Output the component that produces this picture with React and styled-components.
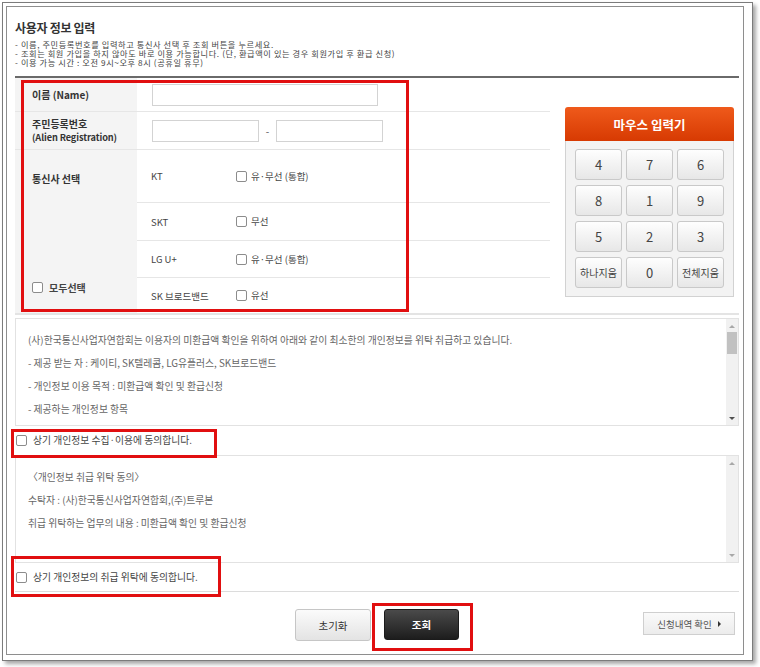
import React from "react";
import styled, { createGlobalStyle } from "styled-components";

const GlobalStyle = createGlobalStyle`
  html, body { margin: 0; padding: 0; background: #fff; }
  body { font-family: "Noto Sans CJK KR", "Noto Sans", sans-serif; color: #333; }
  * { box-sizing: border-box; }
`;

const Page = styled.div`
  position: relative;
  width: 760px;
  height: 667px;
  padding: 2px 0 0 2px;
`;

const OuterFrame = styled.div`
  width: 751px;
  height: 659px;
  border: 1px solid #7b7b7b;
  box-shadow: 3px 3px 4px rgba(0, 0, 0, 0.35);
  padding: 3px 8px 5px 3px;
  background: #fff;
`;

const InnerFrame = styled.div`
  height: 100%;
  border: 1px solid #8e8e8e;
  padding: 0 4px 0 8px;
  display: flex;
  flex-direction: column;
`;

const Title = styled.h2`
  margin: 13px 0 0;
  font-size: 12px;
  line-height: 16px;
  font-weight: bold;
  letter-spacing: -0.3px;
  color: #333;
`;

const Guide = styled.ul`
  list-style: none;
  margin: 3.5px 0 0;
  padding: 0 0 8.7px;
  border-bottom: 2px solid #6a6a6a;
  font-size: 8.2px;
  line-height: 9.3px;
  letter-spacing: 0.6px;
  color: #444;
`;

const FormArea = styled.div`
  display: flex;
  align-items: flex-start;
  border-bottom: 2px solid #e4e4e4;
`;

const Table = styled.div`
  width: 535px;
`;

const Row = styled.div`
  display: grid;
  grid-template-columns: 122px 1fr;
  height: ${(p) => p.$h}px;
  border-bottom: 1px solid #e6e6e6;
`;

const Label = styled.div`
  background: #f4f4f4;
  padding-left: 17px;
  display: flex;
  flex-direction: column;
  justify-content: center;
  font-size: 10px;
  line-height: 13.5px;
  font-weight: bold;
  color: #333;
`;

const SubLabel = styled.span`
  font-size: 9.2px;
  letter-spacing: -0.1px;
`;

const Cell = styled.div`
  display: flex;
  align-items: center;
  padding-left: 15px;
`;

const TextInput = styled.input`
  width: ${(p) => p.$w}px;
  height: 22px;
  border: 1px solid #d3d3d3;
  background: #fff;
  padding: 0 4px;
  outline: none;
`;

const Dash = styled.span`
  width: 17px;
  text-align: center;
  font-size: 10px;
  color: #555;
`;

const CarrierBlock = styled.div`
  display: grid;
  grid-template-columns: 122px 1fr;
  height: 163px;
`;

const CarrierLabel = styled(Label)`
  justify-content: space-between;
  padding-top: 22px;
  padding-bottom: 19px;
  line-height: 13px;
`;

const CarrierRow = styled.div`
  display: grid;
  grid-template-columns: 85px 1fr;
  align-items: center;
  padding-left: 14px;
  height: ${(p) => p.$h}px;
  border-bottom: ${(p) => (p.$last ? "none" : "1px solid #e6e6e6")};
  font-size: 9.5px;
  color: #444;
`;

const Check = styled.label`
  display: inline-flex;
  align-items: center;
  gap: ${(p) => p.$gap || 4}px;
  font-size: ${(p) => p.$size || 9.5}px;
  font-weight: ${(p) => (p.$bold ? "bold" : "normal")};
  color: #444;
  line-height: 13px;
`;

const Box = styled.span`
  width: 11px;
  height: 11px;
  border: 1px solid #8c8c8c;
  border-radius: 2px;
  background: #fff;
  flex: none;
`;

const Keypad = styled.div`
  width: 169px;
  margin: 29px 0 0 15px;
`;

const KeypadHead = styled.div`
  height: 34px;
  border-radius: 3px 3px 0 0;
  background: linear-gradient(#ef5a1b, #d73a02);
  color: #fff;
  font-size: 12.5px;
  font-weight: bold;
  display: flex;
  align-items: center;
  justify-content: center;
`;

const KeypadBody = styled.div`
  background: #f3f3f3;
  border: 1px solid #d2d2d2;
  border-top: none;
  padding: 8px 9px 8px;
  display: grid;
  grid-template-columns: repeat(3, 47px);
  grid-auto-rows: 31px;
  gap: 5px 4px;
`;

const Key = styled.button`
  border: 1px solid #c9c9c9;
  border-radius: 3px;
  background: linear-gradient(#fefefe, #e7e7e7);
  font-family: inherit;
  font-size: ${(p) => (p.$small ? 10 : 13)}px;
  color: #444;
  padding: 0;
`;

const Agreement = styled.div`
  display: flex;
  height: ${(p) => p.$h}px;
  margin-top: ${(p) => p.$mt || 0}px;
  border: 1px solid #e2e2e2;
`;

const AgreementText = styled.div`
  flex: 1;
  overflow: hidden;
  padding: 15px 12px 0;
  font-size: 9.8px;
  line-height: 13px;
  color: #666;

  p {
    margin: 0 0 10px;
  }
`;

const ScrollTrack = styled.div`
  width: 12px;
  flex: none;
  background: #f1f1f1;
  display: flex;
  flex-direction: column;
  align-items: center;
  padding: 6px 0 5px;
`;

const Arrow = styled.div`
  width: 0;
  height: 0;
  border-left: 3px solid transparent;
  border-right: 3px solid transparent;
  ${(p) => (p.$down ? "border-top" : "border-bottom")}: 3px solid ${(p) => p.$color};
  margin-top: ${(p) => (p.$down ? "auto" : "0")};
`;

const Thumb = styled.div`
  width: 10px;
  height: 22px;
  margin-top: 4px;
  background: #c1c1c1;
`;

const AgreeRow = styled.div`
  height: ${(p) => p.$h}px;
  display: flex;
  align-items: center;
  padding-left: 1px;
  border-bottom: ${(p) => (p.$line ? "1px solid #dcdcdc" : "none")};
`;

const ButtonRow = styled.div`
  display: grid;
  grid-template-columns: 1fr auto 1fr;
  align-items: start;
  padding-top: 17px;
`;

const ButtonGroup = styled.div`
  grid-column: 2;
  display: flex;
  gap: 13px;
`;

const ActionButton = styled.button`
  width: ${(p) => p.$w}px;
  height: ${(p) => p.$h}px;
  border-radius: 3px;
  font-family: inherit;
  font-size: 10.5px;
  padding: 0;
  border: 1px solid ${(p) => (p.$dark ? "#1b1b1b" : "#c6c6c6")};
  background: ${(p) =>
    p.$dark ? "linear-gradient(#4a4a4a, #1d1d1d)" : "linear-gradient(#fbfbfb, #e3e3e3)"};
  color: ${(p) => (p.$dark ? "#fff" : "#333")};
  font-weight: ${(p) => (p.$dark ? "bold" : "normal")};
`;

const HistoryButton = styled.button`
  justify-self: end;
  margin: 3px 4px 0 0;
  width: 92px;
  height: 23px;
  border: 1px solid #cfcfcf;
  background: linear-gradient(#fafafa, #ececec);
  font-family: inherit;
  font-size: 9.5px;
  color: #555;
  display: flex;
  align-items: center;
  justify-content: center;
  gap: 6px;
  padding: 0;
`;

const Caret = styled.span`
  width: 0;
  height: 0;
  border-top: 3px solid transparent;
  border-bottom: 3px solid transparent;
  border-left: 3px solid #333;
`;

const Highlight = styled.div`
  position: absolute;
  left: ${(p) => p.$x}px;
  top: ${(p) => p.$y}px;
  width: ${(p) => p.$w}px;
  height: ${(p) => p.$h}px;
  border: 3px solid #e10f10;
  pointer-events: none;
`;

const carriers = [
  { name: "KT", option: "유·무선 (통합)", h: 53 },
  { name: "SKT", option: "무선", h: 38 },
  { name: "LG U+", option: "유·무선 (통합)", h: 37 },
  { name: "SK 브로드밴드", option: "유선", h: 35, last: true },
];

const keys = ["4", "7", "6", "8", "1", "9", "5", "2", "3", "하나지움", "0", "전체지움"];

function Scrollbar({ thumb }) {
  return (
    <ScrollTrack>
      <Arrow $color="#a8a8a8" />
      {thumb && <Thumb />}
      <Arrow $down $color={thumb ? "#505050" : "#a8a8a8"} />
    </ScrollTrack>
  );
}

export default function App() {
  return (
    <Page>
      <GlobalStyle />
      <OuterFrame>
        <InnerFrame>
          <Title>사용자 정보 입력</Title>
          <Guide>
            <li>- 이름, 주민등록번호를 입력하고 통신사 선택 후 조회 버튼을 누르세요.</li>
            <li>- 조회는 회원 가입을 하지 않아도 바로 이용 가능합니다. (단, 환급액이 있는 경우 회원가입 후 환급 신청)</li>
            <li>- 이용 가능 시간 : 오전 9시~오후 8시 (공휴일 휴무)</li>
          </Guide>

          <FormArea>
            <Table>
              <Row $h={34}>
                <Label>이름 (Name)</Label>
                <Cell>
                  <TextInput $w={226} />
                </Cell>
              </Row>
              <Row $h={38}>
                <Label>
                  <span>주민등록번호</span>
                  <SubLabel>(Alien Registration)</SubLabel>
                </Label>
                <Cell>
                  <TextInput $w={107} />
                  <Dash>-</Dash>
                  <TextInput $w={107} />
                </Cell>
              </Row>
              <CarrierBlock>
                <CarrierLabel>
                  <span>통신사 선택</span>
                  <Check $bold $size={10} $gap={6}>
                    <Box />
                    모두선택
                  </Check>
                </CarrierLabel>
                <div>
                  {carriers.map((c) => (
                    <CarrierRow key={c.name} $h={c.h} $last={c.last}>
                      <span>{c.name}</span>
                      <Check>
                        <Box />
                        {c.option}
                      </Check>
                    </CarrierRow>
                  ))}
                </div>
              </CarrierBlock>
            </Table>

            <Keypad>
              <KeypadHead>마우스 입력기</KeypadHead>
              <KeypadBody>
                {keys.map((k) => (
                  <Key key={k} $small={k.length > 1}>
                    {k}
                  </Key>
                ))}
              </KeypadBody>
            </Keypad>
          </FormArea>

          <Agreement $h={108} $mt={3}>
            <AgreementText>
              <p>(사)한국통신사업자연합회는 이용자의 미환급액 확인을 위하여 아래와 같이 최소한의 개인정보를 위탁 취급하고 있습니다.</p>
              <p>- 제공 받는 자 : 케이티, SK텔레콤, LG유플러스, SK브로드밴드</p>
              <p>- 개인정보 이용 목적 : 미환급액 확인 및 환급신청</p>
              <p>- 제공하는 개인정보 항목</p>
            </AgreementText>
            <Scrollbar thumb />
          </Agreement>
          <AgreeRow $h={29}>
            <Check $gap={6} $size={9.8}>
              <Box />
              상기 개인정보 수집·이용에 동의합니다.
            </Check>
          </AgreeRow>

          <Agreement $h={108}>
            <AgreementText>
              <p>〈개인정보 취급 위탁 동의〉</p>
              <p>수탁자 : (사)한국통신사업자연합회,(주)트루본</p>
              <p>취급 위탁하는 업무의 내용 : 미환급액 확인 및 환급신청</p>
            </AgreementText>
            <Scrollbar />
          </Agreement>
          <AgreeRow $h={29} $line>
            <Check $gap={6} $size={9.8}>
              <Box />
              상기 개인정보의 취급 위탁에 동의합니다.
            </Check>
          </AgreeRow>

          <ButtonRow>
            <ButtonGroup>
              <ActionButton $w={76} $h={32}>초기화</ActionButton>
              <ActionButton $w={75} $h={31} $dark>
                조회
              </ActionButton>
            </ButtonGroup>
            <HistoryButton>
              신청내역 확인
              <Caret />
            </HistoryButton>
          </ButtonRow>
        </InnerFrame>
      </OuterFrame>

      <Highlight $x={21} $y={80} $w={388} $h={232} />
      <Highlight $x={11} $y={429} $w={206} $h={29} />
      <Highlight $x={11} $y={556} $w={210} $h={41} />
      <Highlight $x={372} $y={603} $w={101} $h={48} />
    </Page>
  );
}
